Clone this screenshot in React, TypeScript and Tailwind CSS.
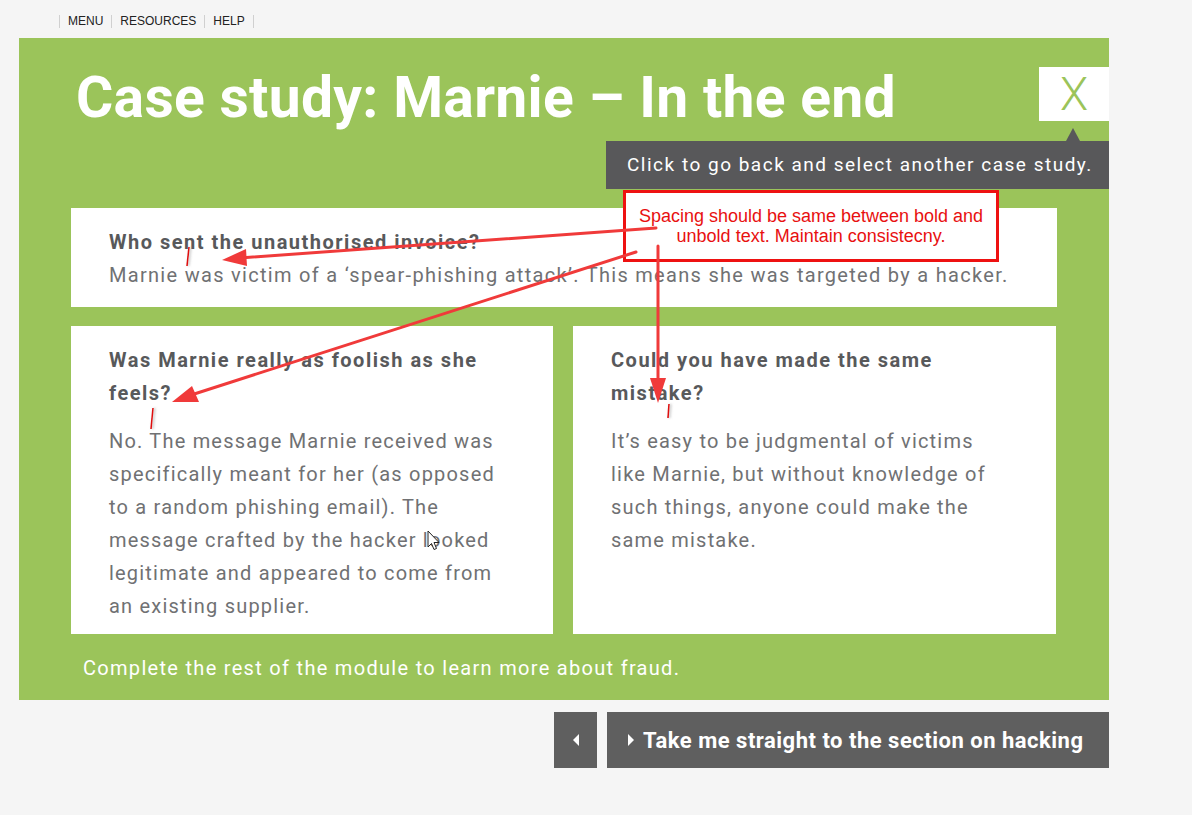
import React from "react";

const din = { fontFamily: "Roboto, 'Open Sans', sans-serif" };

function Card({ title, lines, className = "" }: { title: string[]; lines: string[]; className?: string }) {
  return (
    <div className={"bg-white pl-[38px] pr-[20px] pt-[18px] pb-[11px] " + className}>
      <h3 className="text-[20px] leading-[33px] font-bold tracking-[1.5px] text-[#58595b]">
        {title.map((t, i) => (
          <span key={i} className="block">{t}</span>
        ))}
      </h3>
      <p className="mt-[15px] text-[20px] leading-[33px] tracking-[1.2px] text-[#707173]">
        {lines.map((t, i) => (
          <span key={i} className="block">{t}</span>
        ))}
      </p>
    </div>
  );
}

function Annotations() {
  return (
    <svg className="pointer-events-none absolute left-0 top-0" width="1192" height="815">
      <defs>
        <filter id="sh" x="-50%" y="-50%" width="200%" height="200%">
          <feDropShadow dx="1.5" dy="0" stdDeviation="0.8" floodColor="#888" floodOpacity="0.6" />
        </filter>
      </defs>
      <g stroke="#f03a3a" strokeWidth="3" strokeLinecap="round">
        <line x1="656" y1="228" x2="240" y2="258" />
        <line x1="636" y1="252" x2="188" y2="396" />
        <line x1="658" y1="246" x2="658" y2="380" />
      </g>
      <g fill="#f03a3a">
        <polygon points="222,260 246,249 247,266" />
        <polygon points="172,402 192,386 199,402" />
        <polygon points="658,403 650,378 666,378" />
      </g>
      <g stroke="#e01010" strokeWidth="1.6" filter="url(#sh)">
        <line x1="189" y1="247" x2="187" y2="266" />
        <line x1="153" y1="408" x2="151" y2="429" />
        <line x1="669" y1="404" x2="668" y2="418" />
      </g>
      <path
        d="M428 531 L428 547 L431.5 543.5 L434 549.5 L436.5 548.5 L434 542.5 L439 542.5 Z"
        fill="#fff"
        stroke="#222"
        strokeWidth="1"
        strokeLinejoin="round"
      />
    </svg>
  );
}

export default function App() {
  return (
    <div className="relative h-[815px] w-[1192px] overflow-hidden bg-[#f5f5f5]" style={din}>
      <nav className="flex items-center pl-[59px] pt-[14px] text-[12px] leading-[14px] text-[#222]" style={{ fontFamily: "'Liberation Sans', Arial, sans-serif" }}>
        <span className="h-[13px] w-px bg-[#d0d0d0]" />
        <span className="px-[8px]">MENU</span>
        <span className="h-[13px] w-px bg-[#d0d0d0]" />
        <span className="px-[8px]">RESOURCES</span>
        <span className="h-[13px] w-px bg-[#d0d0d0]" />
        <span className="px-[8px]">HELP</span>
        <span className="h-[13px] w-px bg-[#d0d0d0]" />
      </nav>

      <main className="relative ml-[19px] mt-[10px] h-[662px] w-[1090px] bg-[#9bc45a]">
        <div className="flex items-start justify-between">
          <h1 className="pl-[57px] pt-[25px] text-[57px] font-bold leading-[70px] tracking-[0.3px] text-white">
            Case study: Marnie – In the end
          </h1>
          <button className="mt-[29px] flex h-[54px] w-[70px] items-center justify-center bg-white text-[46px] font-light leading-none text-[#9bc45a]">
            X
          </button>
        </div>

        <div className="absolute right-0 top-[103px] flex h-[48px] w-[503px] items-center bg-[#58585a] pl-[21px] text-[19px] tracking-[1.5px] text-white">
          <span className="absolute -top-[13px] right-[29px] h-0 w-0 border-x-[7px] border-b-[13px] border-x-transparent border-b-[#58585a]" />
          Click to go back and select another case study.
        </div>

        <div className="mt-[75px] px-[52px]">
          <div className="bg-white pl-[38px] pt-[18px] pb-[15px]">
            <h3 className="text-[20px] font-bold leading-[33px] tracking-[1.5px] text-[#58595b]">
              Who sent the unauthorised invoice?
            </h3>
            <p className="text-[20px] leading-[33px] tracking-[1.3px] text-[#707173]">
              Marnie was victim of a ‘spear-phishing attack’. This means she was targeted by a hacker.
            </p>
          </div>

          <div className="mt-[19px] grid grid-cols-[482px_483px] gap-[20px]">
            <Card
              title={["Was Marnie really as foolish as she", "feels?"]}
              lines={[
                "No. The message Marnie received was",
                "specifically meant for her (as opposed",
                "to a random phishing email). The",
                "message crafted by the hacker looked",
                "legitimate and appeared to come from",
                "an existing supplier.",
              ]}
            />
            <Card
              title={["Could you have made the same", "mistake?"]}
              lines={[
                "It’s easy to be judgmental of victims",
                "like Marnie, but without knowledge of",
                "such things, anyone could make the",
                "same mistake.",
              ]}
            />
          </div>

          <p className="mt-[20px] pl-[12px] text-[20px] leading-[28px] tracking-[1.3px] text-white">
            Complete the rest of the module to learn more about fraud.
          </p>
        </div>
      </main>

      <div className="mt-[12px] flex w-[1109px] justify-end gap-[10px]">
        <button className="flex h-[56px] w-[43px] items-center justify-center bg-[#5f5f5f]">
          <span className="h-0 w-0 border-y-[6px] border-r-[6px] border-y-transparent border-r-white" />
        </button>
        <button className="flex h-[56px] w-[502px] items-center gap-[9px] bg-[#5f5f5f] pl-[21px] text-[22px] font-bold tracking-[0.5px] text-white">
          <span className="h-0 w-0 border-y-[6px] border-l-[6px] border-y-transparent border-l-white" />
          Take me straight to the section on hacking
        </button>
      </div>

      <div
        className="absolute left-[623px] top-[190px] flex h-[72px] w-[376px] flex-col items-center justify-center border-[3px] border-[#ee1111] bg-white text-center text-[18px] leading-[20px] text-[#e81010]"
        style={{ fontFamily: "'Liberation Sans', Arial, sans-serif" }}
      >
        <span>Spacing should be same between bold and</span>
        <span>unbold text. Maintain consistecny.</span>
      </div>

      <Annotations />
    </div>
  );
}
